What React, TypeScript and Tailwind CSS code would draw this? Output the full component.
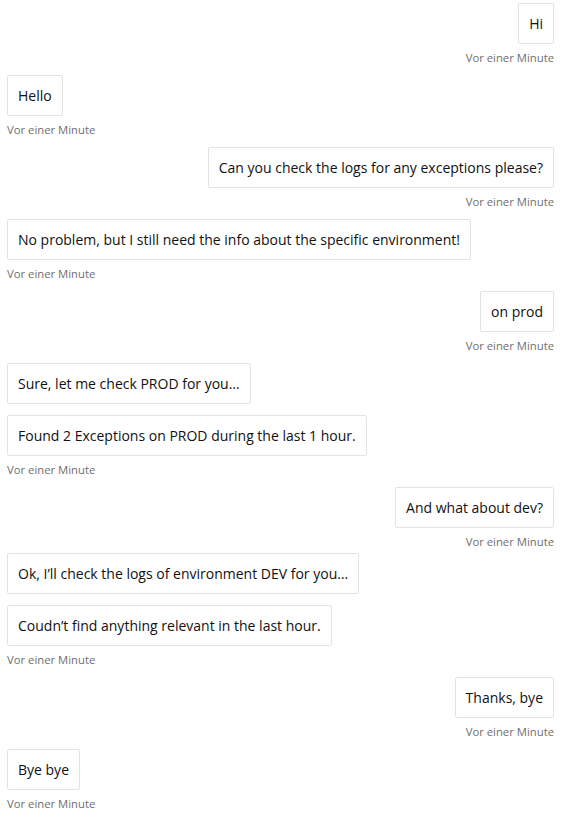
import React from "react";

type Group = { side: "left" | "right"; msgs: string[]; mt?: string };

const groups: Group[] = [
  { side: "right", msgs: ["Hi"] },
  { side: "left", msgs: ["Hello"] },
  { side: "right", msgs: ["Can you check the logs for any exceptions please?"] },
  { side: "left", msgs: ["No problem, but I still need the info about the specific environment!"] },
  { side: "right", msgs: ["on prod"] },
  { side: "left", msgs: ["Sure, let me check PROD for you…", "Found 2 Exceptions on PROD during the last 1 hour."] },
  { side: "right", msgs: ["And what about dev?"] },
  { side: "left", msgs: ["Ok, I’ll check the logs of environment DEV for you…", "Coudn’t find anything relevant in the last hour."], mt: "short" },
  { side: "right", msgs: ["Thanks, bye"] },
  { side: "left", msgs: ["Bye bye"] },
];

export default function App() {
  return (
    <div
      className="w-[566px] h-[828px] bg-white pt-[3px] pl-[7px] pr-[12px] flex flex-col overflow-hidden"
      style={{ fontFamily: '"Open Sans", "Noto Sans", sans-serif' }}
    >
      {groups.map((g, i) => (
        <div
          key={i}
          className={
            "flex flex-col " +
            (g.side === "right" ? "items-end " : "items-start ") +
            (i === 0 ? "" : g.mt === "short" ? "mt-[2px]" : "mt-[8px]")
          }
        >
          <div className={"flex flex-col gap-[11px] " + (g.side === "right" ? "items-end" : "items-start")}>
            {g.msgs.map((m, j) => (
              <div
                key={j}
                className="h-[41px] flex items-center px-[10px] border border-[#e3e3e3] rounded-[2px] bg-white text-[14px] text-[#111111] whitespace-nowrap"
              >
                {m}
              </div>
            ))}
          </div>
          <div className="mt-[5px] h-[18px] leading-[18px] text-[11.3px] text-[#6f6f6f]">Vor einer Minute</div>
        </div>
      ))}
    </div>
  );
}
